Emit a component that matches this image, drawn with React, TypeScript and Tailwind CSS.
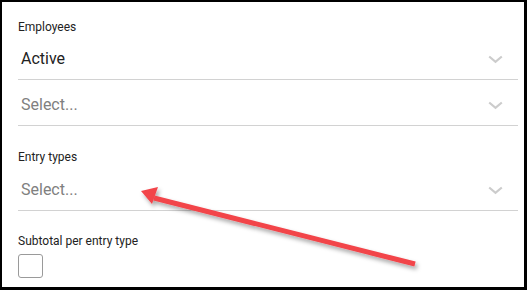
import React from 'react';

const Chevron = () => (
  <svg width="15" height="9" viewBox="0 0 15 9" className="shrink-0">
    <path d="M1.2 1.5 L7.5 6.8 L13.8 1.5" fill="none" stroke="#cccccc" strokeWidth="2.2" />
  </svg>
);

function SelectRow({ value, placeholder }: { value?: string; placeholder?: string }) {
  return (
    <div className="flex h-[46px] items-center justify-between border-b border-[#d2d2d2] pt-[5px] pl-[3px] pr-[15px]">
      {value ? (
        <span className="text-[16px] text-[#222]">{value}</span>
      ) : (
        <span className="text-[16px] text-[#808080]">{placeholder}</span>
      )}
      <Chevron />
    </div>
  );
}

export default function App() {
  return (
    <div
      className="relative h-[290px] w-[527px] overflow-hidden border-2 border-r-[3px] border-b-[3px] border-black bg-white"
      style={{ fontFamily: 'Roboto, "Liberation Sans", sans-serif' }}
    >
      <div className="px-[16px] pr-[6px]">
        <div className="pt-[17px] text-[12px] leading-[16px] text-[#222]">Employees</div>
        <div className="-mt-[1px]">
          <SelectRow value="Active" />
          <SelectRow placeholder="Select..." />
        </div>

        <div className="pt-[23px] text-[12px] leading-[16px] text-[#222]">Entry types</div>
        <SelectRow placeholder="Select..." />

        <div className="pt-[22px] text-[12px] leading-[16px] text-[#222]">Subtotal per entry type</div>
        <div className="mt-[5px] h-[24px] w-[25px] rounded-[3px] border border-[#9a9a9a] bg-white" />
      </div>

      {/* red callout arrow */}
      <svg className="pointer-events-none absolute left-0 top-0" width="527" height="290">
        <defs>
          <filter id="sh" x="-20%" y="-50%" width="140%" height="200%">
            <feDropShadow dx="2" dy="3" stdDeviation="2" floodColor="#000" floodOpacity="0.35" />
          </filter>
        </defs>
        <g filter="url(#sh)">
          <line x1="413" y1="262" x2="152" y2="196" stroke="#f2444a" strokeWidth="5" />
          <polygon points="139,189 156,185 150,202" fill="#f2444a" />
        </g>
      </svg>
    </div>
  );
}
